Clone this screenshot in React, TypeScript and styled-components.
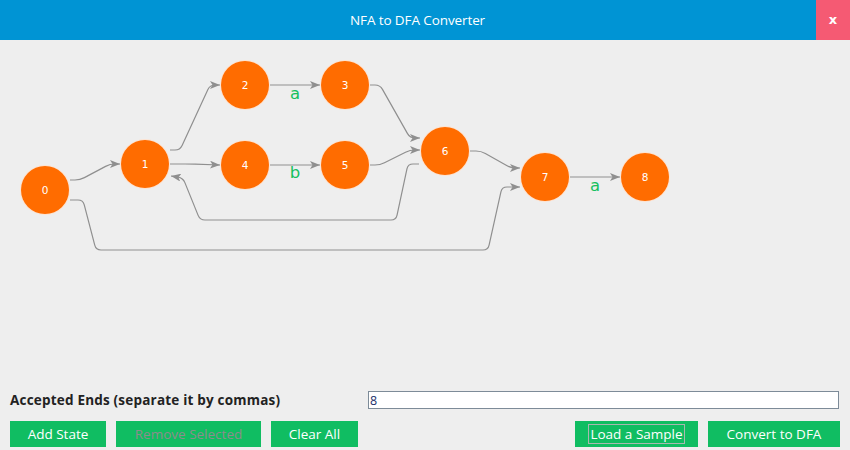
import React from "react";
import styled, { createGlobalStyle } from "styled-components";

const Global = createGlobalStyle`
  html, body { margin: 0; padding: 0; }
  body {
    background: #eeeeee;
    font-family: "Open Sans", "Noto Sans", "DejaVu Sans", sans-serif;
    width: 850px;
    height: 450px;
    overflow: hidden;
  }
`;

const Page = styled.div`
  width: 850px;
  height: 450px;
  display: flex;
  flex-direction: column;
  background: #eeeeee;
`;

const Header = styled.header`
  height: 40px;
  display: flex;
  align-items: stretch;
  background: #0094d4;
  color: #ffffff;
`;

const Title = styled.h1`
  flex: 1;
  margin: 0;
  padding-left: 19px;
  display: flex;
  align-items: center;
  justify-content: center;
  font-size: 13.5px;
  font-weight: 400;
  letter-spacing: -0.1px;
`;

const CloseButton = styled.button`
  width: 34px;
  border: none;
  background: #f55a73;
  color: #ffffff;
  font-family: "DejaVu Sans", sans-serif;
  font-weight: 700;
  font-size: 13px;
  padding: 0 0 2px;
  cursor: pointer;
`;

const Canvas = styled.div`
  position: relative;
  flex: 1;
`;

const Edges = styled.svg`
  position: absolute;
  inset: 0;
  width: 100%;
  height: 100%;
  overflow: visible;
`;

const Node = styled.div`
  position: absolute;
  width: 48px;
  height: 48px;
  margin: -24px 0 0 -24px;
  border-radius: 50%;
  background: #ff6c00;
  box-shadow: 0 0 0 1px rgba(255, 225, 205, 0.9);
  color: #ffffff;
  font-family: "DejaVu Sans", sans-serif;
  font-size: 10.5px;
  display: flex;
  align-items: center;
  justify-content: center;
`;

const EdgeLabel = styled.span`
  position: absolute;
  transform: translate(-50%, -50%);
  color: #16c05e;
  font-family: "DejaVu Sans", sans-serif;
  font-size: 16.5px;
  line-height: 1;
`;

const Footer = styled.footer`
  display: flex;
  flex-direction: column;
  gap: 12px;
  padding: 0 10px 3px 10px;
`;

const EndsRow = styled.div`
  display: flex;
  align-items: center;
  height: 18px;
`;

const EndsLabel = styled.label`
  width: 358px;
  font-weight: 700;
  font-size: 13.5px;
  color: #222222;
  letter-spacing: 0.2px;
`;

const EndsInput = styled.input`
  box-sizing: border-box;
  width: 471px;
  height: 18px;
  margin: 0;
  padding: 0 1px;
  border: 1px solid #7d8b98;
  background: #ffffff;
  color: #1b2f6a;
  font-family: "Open Sans", sans-serif;
  font-size: 12.5px;
  outline: none;
`;

const ButtonRow = styled.div`
  display: flex;
  gap: 10px;
`;

const Spacer = styled.div`
  flex: 1;
`;

const ActionButton = styled.button<{ $w: number; $disabled?: boolean }>`
  box-sizing: border-box;
  width: ${(p) => p.$w}px;
  height: 26px;
  border: none;
  background: #10bd62;
  color: ${(p) => (p.$disabled ? "#8c8c8c" : "#ffffff")};
  font-family: "Open Sans", sans-serif;
  font-size: 13.5px;
  padding: 0;
  display: flex;
  align-items: center;
  justify-content: center;
  cursor: pointer;
`;

const FocusText = styled.span<{ $focused?: boolean }>`
  padding: 0 1px;
  line-height: 18px;
  border: 1px solid ${(p) => (p.$focused ? "#a9b8b0" : "transparent")};
`;

type Pt = [number, number];

function roundedPath(pts: Pt[], r = 5): string {
  let d = `M${pts[0][0]},${pts[0][1]}`;
  for (let i = 1; i < pts.length - 1; i++) {
    const [px, py] = pts[i - 1];
    const [cx, cy] = pts[i];
    const [nx, ny] = pts[i + 1];
    const l1 = Math.hypot(cx - px, cy - py);
    const l2 = Math.hypot(nx - cx, ny - cy);
    const r1 = Math.min(r, l1 / 2);
    const r2 = Math.min(r, l2 / 2);
    const ax = cx - ((cx - px) / l1) * r1;
    const ay = cy - ((cy - py) / l1) * r1;
    const bx = cx + ((nx - cx) / l2) * r2;
    const by = cy + ((ny - cy) / l2) * r2;
    d += ` L${ax},${ay} Q${cx},${cy} ${bx},${by}`;
  }
  const last = pts[pts.length - 1];
  d += ` L${last[0]},${last[1]}`;
  return d;
}

const OY = 40;
const nodes: { id: string; x: number; y: number }[] = [
  { id: "0", x: 45, y: 190 },
  { id: "1", x: 145, y: 164 },
  { id: "2", x: 245, y: 85 },
  { id: "3", x: 345, y: 85 },
  { id: "4", x: 245, y: 165 },
  { id: "5", x: 345, y: 165 },
  { id: "6", x: 445, y: 151 },
  { id: "7", x: 545, y: 177 },
  { id: "8", x: 645, y: 177 },
];

const edges: Pt[][] = [
  [[70, 180], [80, 180], [110, 164], [120, 164]],
  [[170, 150], [180, 150], [210, 85], [220, 85]],
  [[170, 164], [190, 164], [220, 165]],
  [[270, 85], [320, 85]],
  [[270, 165], [320, 165]],
  [[370, 85], [380, 85], [410, 138], [420, 138]],
  [[370, 165], [380, 165], [410, 150], [420, 150]],
  [[419, 164], [408, 164], [396, 220], [200, 220], [183, 178], [171, 176]],
  [[70, 200], [83, 200], [96, 250], [488, 250], [502, 187], [520, 187]],
  [[470, 151], [481, 151], [511, 168], [520, 168]],
  [[570, 177], [620, 177]],
];

const labels: { t: string; x: number; y: number }[] = [
  { t: "a", x: 295, y: 94 },
  { t: "b", x: 295, y: 173 },
  { t: "a", x: 595, y: 186 },
];

export default function App() {
  return (
    <Page>
      <Global />
      <Header>
        <Title>NFA to DFA Converter</Title>
        <CloseButton>x</CloseButton>
      </Header>
      <Canvas>
        <Edges>
          <defs>
            <marker
              id="arrow"
              viewBox="0 0 10 8"
              refX="10"
              refY="4"
              markerWidth="10"
              markerHeight="8"
              markerUnits="userSpaceOnUse"
              orient="auto"
            >
              <path d="M0,0 L10,4 L0,8 L2.5,4 z" fill="#8f8f8f" />
            </marker>
          </defs>
          {edges.map((e, i) => (
            <path
              key={i}
              d={roundedPath(e.map(([x, y]) => [x, y - OY] as Pt))}
              fill="none"
              stroke="#8f8f8f"
              strokeWidth={1.2}
              markerEnd="url(#arrow)"
            />
          ))}
        </Edges>
        {labels.map((l, i) => (
          <EdgeLabel key={i} style={{ left: l.x, top: l.y - OY }}>
            {l.t}
          </EdgeLabel>
        ))}
        {nodes.map((n) => (
          <Node key={n.id} style={{ left: n.x, top: n.y - OY }}>
            {n.id}
          </Node>
        ))}
      </Canvas>
      <Footer>
        <EndsRow>
          <EndsLabel>Accepted Ends (separate it by commas)</EndsLabel>
          <EndsInput defaultValue="8" />
        </EndsRow>
        <ButtonRow>
          <ActionButton $w={96}>Add State</ActionButton>
          <ActionButton $w={145} $disabled>Remove Selected</ActionButton>
          <ActionButton $w={87}>Clear All</ActionButton>
          <Spacer />
          <ActionButton $w={123}>
            <FocusText $focused>Load a Sample</FocusText>
          </ActionButton>
          <ActionButton $w={132}>Convert to DFA</ActionButton>
        </ButtonRow>
      </Footer>
    </Page>
  );
}
